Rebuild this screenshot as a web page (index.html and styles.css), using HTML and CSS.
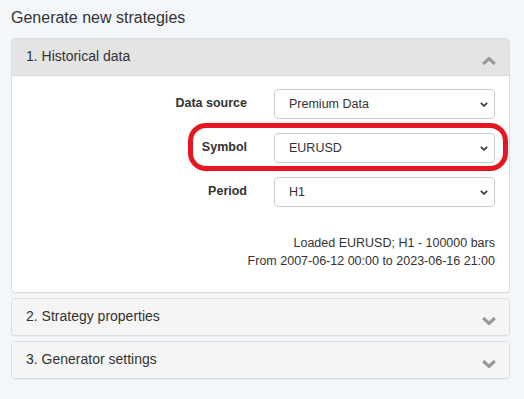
FILE: index.html
```html
<!DOCTYPE html>
<html>
<head>
<meta charset="UTF-8">
<title>Generate new strategies</title>
<link rel="stylesheet" href="styles.css">
</head>
<body>

<div class="page">
	<h1 class="title">Generate new strategies</h1>

	<!-- 1. Historical data (open) -->
	<div class="panel">
		<div class="panel-head open">
			<span class="panel-title">1. Historical data</span>
			<svg class="chev" width="14" height="8" viewBox="0 0 14 8"><path d="M1.2 7 L7 1.6 L12.8 7" /></svg>
		</div>
		<div class="panel-body">
			<div class="row">
				<label class="lbl" for="dataSource">Data source</label>
				<span class="sel-wrap">
					<select id="dataSource" class="sel"><option>Premium Data</option></select>
					<svg class="sel-arrow" width="8" height="5" viewBox="0 0 8 5"><path d="M0.8 0.8 L4 3.9 L7.2 0.8" /></svg>
				</span>
			</div>
			<div class="row">
				<label class="lbl" for="symbol">Symbol</label>
				<span class="sel-wrap">
					<select id="symbol" class="sel"><option>EURUSD</option></select>
					<svg class="sel-arrow" width="8" height="5" viewBox="0 0 8 5"><path d="M0.8 0.8 L4 3.9 L7.2 0.8" /></svg>
				</span>
				<div class="mark"></div>
			</div>
			<div class="row">
				<label class="lbl" for="period">Period</label>
				<span class="sel-wrap">
					<select id="period" class="sel"><option>H1</option></select>
					<svg class="sel-arrow" width="8" height="5" viewBox="0 0 8 5"><path d="M0.8 0.8 L4 3.9 L7.2 0.8" /></svg>
				</span>
			</div>
			<div class="info">
				Loaded EURUSD; H1 - 100000 bars<br>
				From 2007-06-12 00:00 to 2023-06-16 21:00
			</div>
		</div>
	</div>

	<!-- 2. Strategy properties (closed) -->
	<div class="panel">
		<div class="panel-head">
			<span class="panel-title">2. Strategy properties</span>
			<svg class="chev" width="14" height="8" viewBox="0 0 14 8"><path d="M1.2 1 L7 6.4 L12.8 1" /></svg>
		</div>
	</div>

	<!-- 3. Generator settings (closed) -->
	<div class="panel">
		<div class="panel-head">
			<span class="panel-title">3. Generator settings</span>
			<svg class="chev" width="14" height="8" viewBox="0 0 14 8"><path d="M1.2 1 L7 6.4 L12.8 1" /></svg>
		</div>
	</div>
</div>

</body>
</html>
```

FILE: styles.css
```css
* {box-sizing: border-box;}
body {margin: 0; background: #f4f7fa; color: #333; font-family: "Liberation Sans", Arial, sans-serif;}

.page {padding: 8px 14px 0 11px;}
.title {margin: 0 0 10px; font-size: 16px; font-weight: normal; line-height: 20px;}

.panel {background: #fff; border: 1px solid #dcdcdc; border-radius: 4px; margin-bottom: 5px; box-shadow: 0 1px 1px rgba(0,0,0,0.04);}
.panel-head {display: flex; justify-content: space-between; align-items: center; height: 36px; padding: 0 13px 0 14px; background: #f5f5f5; border-radius: 3px;}
.panel-head.open {background: #e4e4e4; border-bottom: 1px solid #d8d8d8; height: 37px; border-radius: 3px 3px 0 0;}
.panel-title {font-size: 14px; line-height: 20px; margin-top: -2px;}
.chev {margin-top: 7px;}
.chev path {fill: none; stroke: #999; stroke-width: 3.2;}

.panel-body {padding: 13px 14px 22px 14px;}
.row {position: relative; display: grid; grid-template-columns: 1fr 221px; column-gap: 27px; align-items: center; height: 30px; margin-bottom: 14px;}
.lbl {text-align: right; font-size: 12.5px; font-weight: bold; margin-top: -3px;}
.sel-wrap {position: relative; display: block; height: 30px;}
.sel {appearance: none; -webkit-appearance: none; display: block; width: 100%; height: 30px; padding: 0 24px 0 14px; border: 1px solid #ccc; border-radius: 4px; background: #fff; color: #333; font-family: "Liberation Sans", Arial, sans-serif; font-size: 12.5px; outline: none;}
.sel-arrow {position: absolute; right: 7px; top: 13px; pointer-events: none;}
.sel-arrow path {fill: none; stroke: #444; stroke-width: 1.8;}

.mark {position: absolute; left: 162px; right: -13px; top: -10px; bottom: -8px; border: 5px solid #e5161f; border-radius: 18px; pointer-events: none;}

.info {margin-top: 27px; text-align: right; font-size: 12.5px; line-height: 18px;}
```
